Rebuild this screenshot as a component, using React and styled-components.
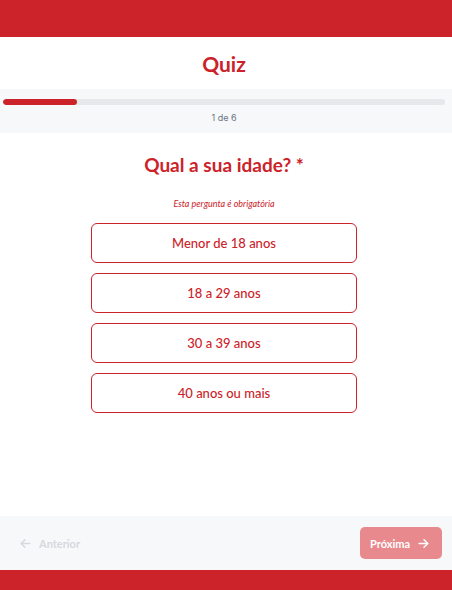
import styled, { createGlobalStyle } from "styled-components";

const GlobalStyle = createGlobalStyle`
  html, body {
    margin: 0;
    padding: 0;
    background: #ffffff;
  }
  body {
    font-family: "Lato", "Noto Sans", sans-serif;
  }
  * {
    box-sizing: border-box;
  }
`;

const Page = styled.div`
  display: flex;
  flex-direction: column;
  min-height: 590px;
`;

const RedBand = styled.div`
  background-color: #cc2229;
  height: ${(props) => props.size}px;
`;

const Header = styled.header`
  height: 52px;
  display: flex;
  align-items: center;
  justify-content: center;
  padding-right: 4px;
  background: #fff;
`;

const Title = styled.h1`
  margin: 0;
  font-size: 21px;
  font-weight: 700;
  color: #cc2229;
`;

const ProgressArea = styled.div`
  background: #f7f8fa;
  padding: 10px 7px 0 3px;
  height: 44px;
  display: flex;
  flex-direction: column;
  align-items: center;
`;

const Track = styled.div`
  width: 100%;
  height: 6px;
  border-radius: 3px;
  background: #e6e8eb;
  overflow: hidden;
`;

const Fill = styled.div`
  height: 100%;
  border-radius: 3px;
  background: #cc2229;
`;

const StepLabel = styled.span`
  margin-top: 7px;
  font-family: "Inter", "Roboto", sans-serif;
  font-size: 9px;
  color: #6b7280;
`;

const Main = styled.main`
  flex: 1;
  display: flex;
  flex-direction: column;
  align-items: center;
  padding-top: 20px;
  padding-right: 4px;
`;

const Question = styled.h2`
  margin: 0;
  font-size: 19px;
  font-weight: 700;
  color: #cc2229;
  line-height: 24px;
`;

const Required = styled.p`
  margin: 21px 0 0;
  font-size: 9px;
  font-style: italic;
  color: #cc2229;
`;

const Options = styled.div`
  margin-top: 14px;
  width: 266px;
  display: flex;
  flex-direction: column;
  gap: 10px;
`;

const Option = styled.button`
  height: 40px;
  border: 1px solid #cc2229;
  border-radius: 6px;
  background: #fff;
  color: #cc2229;
  font-family: "Lato", sans-serif;
  font-size: 13px;
  font-weight: 500;
  cursor: pointer;
`;

const Footer = styled.footer`
  background: #f7f8fa;
  height: 54px;
  display: flex;
  align-items: center;
  justify-content: space-between;
  padding: 0 10px 0 19px;
`;

const NavButton = styled.button`
  display: flex;
  align-items: center;
  gap: 7px;
  border: 0;
  font-family: "Lato", sans-serif;
  font-size: 11px;
  font-weight: 700;
  border-radius: 5px;
  background: ${(props) => (props.primary ? "#e8898d" : "transparent")};
  color: ${(props) => (props.primary ? "#fff" : "#d6d9de")};
  height: 32px;
  padding: ${(props) => (props.primary ? "0 12px 0 10px" : "0")};
  width: ${(props) => (props.primary ? "82px" : "auto")};
  justify-content: center;
`;

const Arrow = ({ dir }) => (
  <svg width="13" height="13" viewBox="0 0 24 24" fill="none" stroke="currentColor" strokeWidth="2.8" strokeLinecap="round" strokeLinejoin="round">
    {dir === "left" ? (
      <>
        <path d="M20 12H5" />
        <path d="M11 5l-7 7 7 7" />
      </>
    ) : (
      <>
        <path d="M4 12h15" />
        <path d="M13 5l7 7-7 7" />
      </>
    )}
  </svg>
);

const options = ["Menor de 18 anos", "18 a 29 anos", "30 a 39 anos", "40 anos ou mais"];

function App() {
  const step = 1;
  const total = 6;
  return (
    <Page>
      <GlobalStyle />
      <RedBand size={37} />
      <Header>
        <Title>Quiz</Title>
      </Header>
      <ProgressArea>
        <Track>
          <Fill style={{ width: `${(step / total) * 100}%` }} />
        </Track>
        <StepLabel>
          {step} de {total}
        </StepLabel>
      </ProgressArea>
      <Main>
        <Question>Qual a sua idade? *</Question>
        <Required>Esta pergunta é obrigatória</Required>
        <Options>
          {options.map((o) => (
            <Option key={o}>{o}</Option>
          ))}
        </Options>
      </Main>
      <Footer>
        <NavButton>
          <Arrow dir="left" />
          Anterior
        </NavButton>
        <NavButton primary>
          Próxima
          <Arrow dir="right" />
        </NavButton>
      </Footer>
      <RedBand size={20} />
    </Page>
  );
}

export default App;
